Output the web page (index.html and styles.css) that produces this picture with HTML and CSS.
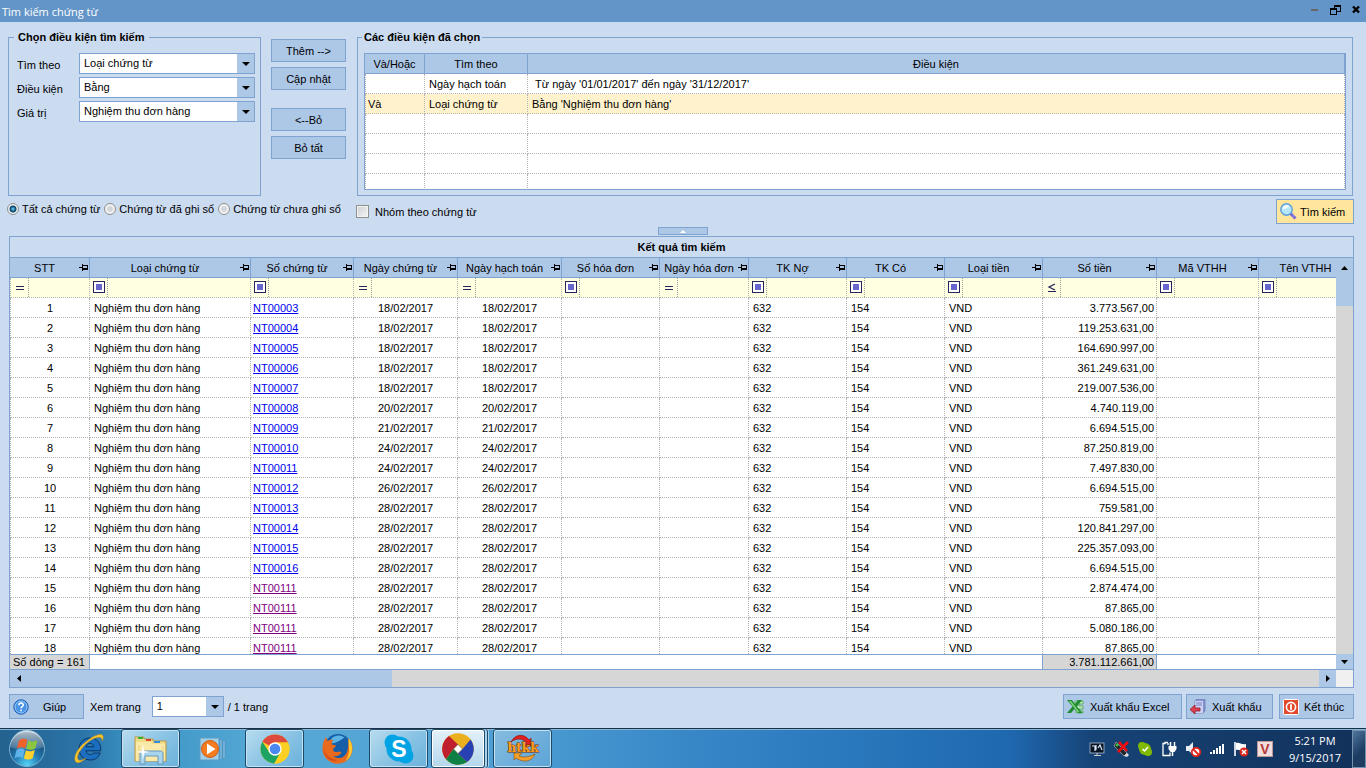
FILE: index.html
```html
<!DOCTYPE html>
<html lang="vi">
<head>
    <meta charset="UTF-8">
    <meta name="viewport" content="width=device-width, initial-scale=1.0">
    <title>Tìm kiếm chứng từ</title>
    <link rel="stylesheet" href="styles.css">
</head>
<body>

<header class="title-bar">
    <h1>Tìm kiếm chứng từ</h1>
    <div class="window-buttons">
        <button type="button" aria-label="Thu nhỏ"><svg width="11" height="11" viewBox="0 0 11 11"><path d="M2 4h7v2H2z" fill="#666"/></svg></button>
        <button type="button" aria-label="Khôi phục"><svg width="11" height="11" viewBox="0 0 11 11" shape-rendering="crispEdges"><path d="M4 0h7v7H7V6h3V2H5v1H4zM0 3h7v7H0zM1 5v4h5V5z" fill="#000" fill-rule="evenodd"/></svg></button>
        <button type="button" aria-label="Đóng"><svg width="11" height="11" viewBox="0 0 11 11"><path d="M2 1.500l6 6M8 1.500l-6 6" stroke="#000" stroke-width="2.400"/></svg></button>
    </div>
</header>

<main>
    <section class="conditions">
        <fieldset class="choose">
            <legend>Chọn điều kiện tìm kiếm</legend>
            <div class="field">
                <label for="searchBy">Tìm theo</label>
                <span class="combo"><select id="searchBy"><option>Loại chứng từ</option></select></span>
            </div>
            <div class="field">
                <label for="operator">Điều kiện</label>
                <span class="combo"><select id="operator"><option>Bằng</option></select></span>
            </div>
            <div class="field">
                <label for="value">Giá trị</label>
                <span class="combo"><select id="value"><option>Nghiệm thu đơn hàng</option></select></span>
            </div>
        </fieldset>

        <div class="actions">
            <button type="button" class="btn">Thêm --&gt;</button>
            <button type="button" class="btn">Cập nhật</button>
            <button type="button" class="btn remove">&lt;--Bỏ</button>
            <button type="button" class="btn">Bỏ tất</button>
        </div>

        <fieldset class="chosen">
            <legend>Các điều kiện đã chọn</legend>
            <div class="chosen-box">
                <table>
                    <colgroup><col class="w-join"><col class="w-by"><col></colgroup>
                    <thead>
                        <tr><th>Và/Hoặc</th><th>Tìm theo</th><th>Điều kiện</th></tr>
                    </thead>
                    <tbody>
                        <tr><td></td><td>Ngày hạch toán</td><td>&nbsp;Từ ngày '01/01/2017' đến ngày '31/12/2017'</td></tr>
                        <tr class="selected"><td>Và</td><td>Loại chứng từ</td><td>Bằng 'Nghiệm thu đơn hàng'</td></tr>
                        <tr><td></td><td></td><td></td></tr>
                        <tr><td></td><td></td><td></td></tr>
                        <tr><td></td><td></td><td></td></tr>
                        <tr><td></td><td></td><td></td></tr>
                    </tbody>
                </table>
            </div>
        </fieldset>
    </section>

    <section class="options">
        <div class="radios">
            <label><input type="radio" name="posted" checked>Tất cả chứng từ</label>
            <label><input type="radio" name="posted">Chứng từ đã ghi sổ</label>
            <label><input type="radio" name="posted">Chứng từ chưa ghi sổ</label>
        </div>
        <label class="group-by"><input type="checkbox">Nhóm theo chứng từ</label>
        <button type="button" class="btn search">
            <svg width="17" height="17" viewBox="0 0 17 17"><path d="M10.500 10.500l5 5" stroke="#7a6ad8" stroke-width="3"/><path d="M13 13.500l1-1" stroke="#d5cfff"/><circle cx="6.500" cy="6.500" r="5.700" fill="#b8e6fa" stroke="#5a9fd8" stroke-width="1.400"/><path d="M2.500 6a4 4 0 0 1 7-2.500C8 5 5 6.500 2.500 6z" fill="#f0fbff"/></svg>
            Tìm kiếm
        </button>
    </section>

    <button type="button" class="splitter" aria-label="Thu gọn"><svg width="6" height="3" viewBox="0 0 6 3"><path d="M0 3l3-3 3 3z" fill="#fff"/></svg></button>

    <section class="results">
        <h2>Kết quả tìm kiếm</h2>
        <div class="grid-area">
            <div class="grid-view">
                <table class="grid">
                    <colgroup id="cols"></colgroup>
                    <thead>
                        <tr id="heads"></tr>
                        <tr id="filters" class="filter-row"></tr>
                    </thead>
                    <tbody id="rows"></tbody>
                </table>
            </div>
            <div class="vscroll">
                <button type="button" class="arrow up" aria-label="Lên"><svg width="7" height="4" viewBox="0 0 7 4"><path d="M0 4l3.500-4L7 4z"/></svg></button>
                <div class="vthumb"></div>
            </div>
            <div class="summary">
                <div class="count">Số dòng = 161</div>
                <div class="total">3.781.112.661,00</div>
                <div class="rest"></div>
            </div>
            <button type="button" class="arrow down" aria-label="Xuống"><svg width="7" height="4" viewBox="0 0 7 4"><path d="M0 0l3.500 4L7 0z"/></svg></button>
            <div class="hscroll">
                <button type="button" class="arrow" aria-label="Trái"><svg width="4" height="7" viewBox="0 0 4 7"><path d="M4 0L0 3.500 4 7z"/></svg></button>
                <div class="hthumb"></div>
                <button type="button" class="arrow right" aria-label="Phải"><svg width="4" height="7" viewBox="0 0 4 7"><path d="M0 0l4 3.500L0 7z"/></svg></button>
            </div>
            <div class="corner"></div>
        </div>
    </section>

    <section class="footer">
        <button type="button" class="btn help">
            <svg width="16" height="16" viewBox="0 0 16 16"><circle cx="8" cy="8" r="7.200" fill="#4a93e4" stroke="#1d5cb0"/><circle cx="8" cy="8" r="6" fill="none" stroke="#a9d2fb" stroke-width=".8"/><path d="M5.800 6.300c0-3 4.600-2.900 4.500-.2 0 1.500-2.200 1.600-2.200 3.200M8.100 10.600v1.600" stroke="#fff" stroke-width="1.500" fill="none"/></svg>
            Giúp
        </button>
        <label for="page">Xem trang</label>
        <span class="combo page"><select id="page"><option>1</option></select></span>
        <span class="pages">/ 1 trang</span>
        <button type="button" class="btn excel">
            <svg width="17" height="16" viewBox="0 0 17 16"><path d="M8 2h8v3h-4v2h4v3h-4v2h4v2H9z" fill="#bfe8b8" stroke="#4ba54b" stroke-width=".8"/><path d="M0 1h5l3 4 3-4h4L10 7.500 15.500 14H11L7.500 10 4 14H0l5.500-6.500z" fill="#1f8c35"/><path d="M2 2h2l8.500 11h-2z" fill="#7fd07c"/></svg>
            Xuất khẩu Excel
        </button>
        <button type="button" class="btn export">
            <svg width="16" height="16" viewBox="0 0 16 16"><path d="M5 2l2-2h8v12l-2 2H5z" fill="#8794cf" stroke="#6974b0" stroke-width=".7"/><path d="M5 2h8v12H5z" fill="#c9d0f3"/><path d="M6 4h6M6 6h6" stroke="#7986c6"/><path d="M0 10.500L5 6v3h5v3H5v3z" fill="#e04050" stroke="#8e1926" stroke-width=".8"/></svg>
            Xuất khẩu
        </button>
        <button type="button" class="btn close">
            <svg width="16" height="16" viewBox="0 0 16 16"><rect x=".5" y=".5" width="15" height="15" rx="1" fill="#e2492c" stroke="#fff"/><circle cx="8" cy="8" r="4.600" fill="none" stroke="#fff" stroke-width="1.600"/><path d="M8 5.300v5.400" stroke="#fff" stroke-width="1.800"/></svg>
            Kết thúc
        </button>
    </section>
</main>

<footer class="taskbar">
    <button type="button" class="start" aria-label="Start">
        <svg width="38" height="38" viewBox="0 0 38 38">
            <defs>
                <radialGradient id="orb" cx=".5" cy=".95" r=".85"><stop offset="0" stop-color="#54d5f6"/><stop offset=".45" stop-color="#2379b1"/><stop offset="1" stop-color="#174166"/></radialGradient>
                <linearGradient id="shine" x2="0" y2="1"><stop offset="0" stop-color="#fff" stop-opacity=".7"/><stop offset="1" stop-color="#fff" stop-opacity=".15"/></linearGradient>
            </defs>
            <circle cx="19" cy="19" r="17.500" fill="url(#orb)" stroke="#7db0cf"/>
            <path d="M2 17a17 17 0 0 1 34 0c-8 3-26 3-34 0z" fill="url(#shine)"/>
            <path d="M11 10.500c3-2.500 5.500-2 8.400-.6l-2.200 8.600c-2.700-1.500-5.200-1.600-8.400.3z" fill="#f0602a"/>
            <path d="M20.400 10.500c2.900 1.600 5.800 1.600 9.100-.5l-2.200 8.500c-3.100 1.800-6 1.800-9.100.3z" fill="#8cc63e"/>
            <path d="M8.500 20c3-2 5.600-1.600 8.300-.3l-2.100 8.300c-2.600-1.400-5.200-1.500-8.300.4z" fill="#5cb4ea"/>
            <path d="M17.900 20.200c2.900 1.500 5.800 1.500 9-.4l-2.100 8.300c-3.100 2-6 1.900-9 .4z" fill="#fdd12e"/>
        </svg>
    </button>
    <nav class="tasks">
        <button type="button" class="task" aria-label="Internet Explorer">
            <svg width="32" height="32" viewBox="0 0 32 32"><path d="M17 5C10.500 5 6 10 6 16s4.500 11 11.500 11c5 0 8.300-2.800 9.700-7h-6.700c-1.500 2.500-7 2.200-7.500-2.200h14.800C28.300 10.500 24 5 17 5zm-4 8.800c.6-4.600 7.500-4.600 7.800 0z" fill="#1c6fc0" stroke="#083566"/><path d="M3 29C-1 25 5 14 14 8 21 2 29 0 30 3c.6 1.500 0 3.500-1 5 .3-2-.3-3-1.500-3.500C20 3 8 14 5 22c-1 2.600-.5 4.500 1 5.200 2 .6 5-.8 7-2.200-3 3.500-8 6-10 4z" fill="#f9c62f" stroke="#c98a10" stroke-width=".5"/></svg>
        </button>
        <button type="button" class="task open" aria-label="Windows Explorer">
            <svg width="34" height="32" viewBox="0 0 34 32"><path d="M1 4h9v2h9v2h13v20H1z" fill="#f4dd8a" stroke="#b99a46"/><path d="M4 4h5v2H4z" fill="#36b036"/><path d="M12 6h5v2h-5z" fill="#d8432a"/><path d="M20 8h6v2h-6z" fill="#328fd6"/><path d="M2 9h14l2 2h13v17H2z" fill="#faeaa9"/><path d="M5 12v16M29 13v15" stroke="#e8d184"/><path d="M6 31V21c0-2 1-3 3-3h17c2 0 3 1 3 3v10h-5v-8H11v8z" fill="#a8d5ee" stroke="#6698ba"/><path d="M9 11l1 7 6 1-6 1-1 7-1-7-6-1 6-1z" fill="#fff"/></svg>
        </button>
        <button type="button" class="task" aria-label="Media Player">
            <svg width="30" height="28" viewBox="0 0 30 28"><path d="M2 3h19v22H2z" fill="#a3cee8" stroke="#5f9dc4"/><path d="M22 4l2 1v19l-2 1zM25 5l2 1v17l-2 1z" fill="#85bce0" stroke="#4b8fbb" stroke-width=".6"/><circle cx="12" cy="14" r="8.500" fill="#f47b20" stroke="#d25c10"/><path d="M9 8.500l8.500 5.500L9 19.500z" fill="#fff"/></svg>
        </button>
        <button type="button" class="task open" aria-label="Chrome">
            <svg width="30" height="30" viewBox="0 0 30 30"><circle cx="15" cy="15" r="14.500" fill="#fcd023"/><path d="M15 15L2.400 7.800A14.500 14.500 0 0 1 27.600 7.800L28 8.500H15z" fill="#dd4b3e"/><path d="M2.400 7.800a14.500 14.500 0 0 0 12 21.700L20.700 18.300 9.300 18.300z" fill="#1da463"/><path d="M15 8.500h13a14.500 14.500 0 0 1-13.600 21L20.600 18z" fill="#fcd023"/><circle cx="15" cy="15" r="6.700" fill="#fff"/><circle cx="15" cy="15" r="5.300" fill="#4a87ee"/></svg>
        </button>
        <button type="button" class="task" aria-label="Firefox">
            <svg width="32" height="32" viewBox="0 0 32 32"><circle cx="17" cy="14.500" r="13.500" fill="#165fa8"/><path d="M10 6c3-4 10-5 14-1-3 0-3 2-6 3s-5 3-7 2z" fill="#5ab2e5"/><path d="M27.500 5.500c4 4 5 10 3 15.500C28 28 21 31.500 14 30.500 6 29 1 22 1.500 15 1.700 10 3 7 5 4l1.500 4C8.500 6.500 11 6.700 12.500 7 11 8.500 10.500 10 11 11.500l4 1c0 1.500-2 2.300-3 3.500 0 2 1.500 3.500 4 3 2-.5 3-1 4.500.5-1.500 3-5 4.200-8.500 3.500 5 4 12 2 14-4 1.500-4 1.500-8 1.500-13.500z" fill="#e96a1c"/><path d="M27.500 5.500c3.500 4 4.500 9 3 14.500-1 3-3 6-6 8 3-5 4-9 3.500-13-.3-3.500-.5-6-.5-9.500z" fill="#ffcc2b"/><path d="M2 13c1 8 7 14 15 14-6 3-14-1-15-14z" fill="#d44a1a"/></svg>
        </button>
        <button type="button" class="task open" aria-label="Skype">
            <svg width="30" height="30" viewBox="0 0 30 30"><circle cx="15" cy="15" r="12.500" fill="#00a3e4"/><circle cx="8.500" cy="8.500" r="8" fill="#00a3e4"/><circle cx="21.500" cy="21.500" r="8" fill="#00a3e4"/><text x="15" y="23" text-anchor="middle" class="skype-letter">S</text></svg>
        </button>
        <button type="button" class="task open active" aria-label="MISA">
            <svg width="32" height="32" viewBox="0 0 32 32"><circle cx="16" cy="16" r="15.800" fill="#eab01e"/><path d="M16 11.500L7 3A15.800 15.800 0 0 0 4 26.300L11.500 16z" fill="#c01f2e"/><path d="M11.500 16L4 26.300A15.800 15.800 0 0 0 25 29L16 20.500z" fill="#0d8046"/><path d="M16 20.500L25 29A15.800 15.800 0 0 0 28.500 6.500L20.500 16z" fill="#2740b4"/><path d="M16 11.500l4.500 4.500-4.500 4.500-4.500-4.500z" fill="#fff" stroke="#444" stroke-width=".5"/></svg>
        </button>
        <button type="button" class="task open running" aria-label="HTKK">
            <svg width="34" height="30" viewBox="0 0 34 30"><path d="M5 8C9 0 18-1 23 6l2-2v8h-7l2.500-3C17 4 10 4 5 8z" fill="#e21f1f" stroke="#7a1010" stroke-width=".6"/><path d="M29 20c-3 8-12 9-19 4l-2 2v-7h8l-3 3c5 2 10 1 16-2z" fill="#f4a02a" stroke="#884a0c" stroke-width=".6"/><text x="17" y="18" text-anchor="middle" class="htkk-letters">htkk</text></svg>
        </button>
    </nav>
    <div class="tray">
        <svg width="16" height="16" viewBox="0 0 16 16"><rect x="1" y="2" width="14" height="10" fill="#0a1322" stroke="#8ea4bd"/><path d="M3 5h3v5M7 4v5M9 7l2-3 2 5" stroke="#d9ecff" stroke-width="1.200" fill="none"/><path d="M8 12v2M5 14.500h7" stroke="#ccc"/></svg>
        <svg width="16" height="16" viewBox="0 0 16 16"><path d="M3 1l11 11-3 3L1 5z" fill="#20262c" stroke="#889"/><circle cx="4" cy="4" r="1.500" fill="#3fc03f"/><path d="M11 15l3-3 2 2-2 2z" fill="#ddd"/><path d="M5 11L15 1M6 1l8 9" stroke="#f00c0c" stroke-width="2.600"/></svg>
        <svg width="16" height="16" viewBox="0 0 16 16"><circle cx="8" cy="8" r="6" fill="#7fba00"/><circle cx="5" cy="5" r="4" fill="#7fba00"/><circle cx="11" cy="11" r="4" fill="#7fba00"/><path d="M5.500 8l2 2 3.500-4" stroke="#fff" stroke-width="1.500" fill="none"/></svg>
        <svg width="16" height="16" viewBox="0 0 16 16"><path d="M7 1.500H4v1H2v12h7v-3M7 2v2" stroke="#fff" stroke-width="1.300" fill="none"/><path d="M9.500 1v4M13.500 1v4" stroke="#fff" stroke-width="1.500"/><path d="M7.500 5h8v3l-2 3h-4l-2-3z" fill="#fff"/><path d="M11.500 10v5" stroke="#fff" stroke-width="1.500"/></svg>
        <svg width="16" height="16" viewBox="0 0 16 16"><path d="M1 5h3l4-4v13l-4-4H1z" fill="#e6edf5"/><circle cx="11" cy="11" r="4.200" fill="#fff" stroke="#e0261c" stroke-width="1.800"/><path d="M8 8l6 6" stroke="#e0261c" stroke-width="1.800"/></svg>
        <svg width="16" height="16" viewBox="0 0 16 16" shape-rendering="crispEdges"><path d="M1 11h2v2H1zM4 9h2v4H4zM7 7h2v6H7zM10 5h2v8h-2zM13 3h2v10h-2z" fill="#fff"/></svg>
        <svg width="16" height="16" viewBox="0 0 16 16"><path d="M2 1v14" stroke="#fff" stroke-width="1.600"/><path d="M3 2c4-1 5 2 10 1v7c-5 1-6-2-10-1z" fill="#fff"/><circle cx="11" cy="11" r="4.500" fill="#d8281e"/><path d="M9 9l4 4M13 9l-4 4" stroke="#fff" stroke-width="1.500"/></svg>
        <svg width="16" height="16" viewBox="0 0 16 16"><rect x=".5" y=".5" width="15" height="15" fill="#f3dede" stroke="#b99"/><text x="8" y="13" text-anchor="middle" class="v-letter">V</text></svg>
    </div>
    <div class="clock"><span>5:21 PM</span><span>9/15/2017</span></div>
    <button type="button" class="show-desktop" aria-label="Show desktop"></button>
</footer>

<script>
    // name, width, filter operator
    const columns = [
        ["STT", 80, "="],
        ["Loại chứng từ", 161, "box"],
        ["Số chứng từ", 103, "box"],
        ["Ngày chứng từ", 104, "="],
        ["Ngày hạch toán", 104, "="],
        ["Số hóa đơn", 98, "box"],
        ["Ngày hóa đơn", 89, "="],
        ["TK Nợ", 98, "box"],
        ["TK Có", 98, "box"],
        ["Loại tiền", 98, "box"],
        ["Số tiền", 114, "<"],
        ["Mã VTHH", 102, "box"],
        ["Tên VTHH", 104, "box"]
    ];

    // document number, date, amount
    const data = [
        ["NT00003", "18/02/2017", "3.773.567,00"],
        ["NT00004", "18/02/2017", "119.253.631,00"],
        ["NT00005", "18/02/2017", "164.690.997,00"],
        ["NT00006", "18/02/2017", "361.249.631,00"],
        ["NT00007", "18/02/2017", "219.007.536,00"],
        ["NT00008", "20/02/2017", "4.740.119,00"],
        ["NT00009", "21/02/2017", "6.694.515,00"],
        ["NT00010", "24/02/2017", "87.250.819,00"],
        ["NT00011", "24/02/2017", "7.497.830,00"],
        ["NT00012", "26/02/2017", "6.694.515,00"],
        ["NT00013", "28/02/2017", "759.581,00"],
        ["NT00014", "28/02/2017", "120.841.297,00"],
        ["NT00015", "28/02/2017", "225.357.093,00"],
        ["NT00016", "28/02/2017", "6.694.515,00"],
        ["NT00111", "28/02/2017", "2.874.474,00"],
        ["NT00111", "28/02/2017", "87.865,00"],
        ["NT00111", "28/02/2017", "5.080.186,00"],
        ["NT00111", "28/02/2017", "87.865,00"]
    ];

    const pin = '<svg width="9" height="7" viewBox="0 0 9 7" shape-rendering="crispEdges"><path d="M0 3h3v1H0zM3 0h1v7H3zM4 1h5v1H4zM4 4h5v2H4zM8 2h1v2H8z" fill="#000"/></svg>';
    const operators = {
        "=": '<svg width="12" height="12" viewBox="0 0 12 12" shape-rendering="crispEdges"><path d="M2 5h8v1H2zM2 8h8v1H2z" fill="#26265c"/></svg>',
        "box": '<svg width="12" height="12" viewBox="0 0 12 12" shape-rendering="crispEdges"><path d="M0 0h12v12H0z" fill="#26265c"/><path d="M1 1h10v10H1z" fill="#fff"/><path d="M3 3h6v6H3z" fill="#6666cc"/></svg>',
        "<": '<svg width="12" height="12" viewBox="0 0 12 12"><path d="M9 3L3 6l6 3" stroke="#26265c" stroke-width="1.300" fill="none"/><path d="M2 10h8v1H2z" fill="#26265c"/></svg>'
    };

    document.getElementById("cols").innerHTML = columns.map(c => `<col style="width:${c[1]}px">`).join("");
    document.getElementById("heads").innerHTML = columns.map(c => `<th><div class="head"><span>${c[0]}</span>${pin}</div></th>`).join("");
    document.getElementById("filters").innerHTML = columns.map(c => `<td><div class="op">${operators[c[2]]}</div></td>`).join("");

    document.getElementById("rows").innerHTML = data.map((d, i) => `<tr>
        <td class="center">${i + 1}</td>
        <td>Nghiệm thu đơn hàng</td>
        <td class="doc"><a href="#"${d[0] === "NT00111" ? ' class="seen"' : ""}>${d[0]}</a></td>
        <td class="center">${d[1]}</td>
        <td class="center">${d[1]}</td>
        <td></td>
        <td></td>
        <td>632</td>
        <td>154</td>
        <td>VND</td>
        <td class="money">${d[2]}</td>
        <td></td>
        <td></td>
    </tr>`).join("");
</script>

</body>
</html>
```

FILE: styles.css
```css
* {
    box-sizing: border-box;
}

body {
    margin: 0;
    height: 100vh;
    display: flex;
    flex-direction: column;
    overflow: hidden;
    background-color: #cbdbf0;
    color: #000;
    font: 11px/14px "Liberation Sans", Arial, sans-serif;
}

button, select, input {
    font: inherit;
    color: inherit;
    margin: 0;
    padding: 0;
}

button {
    cursor: pointer;
}

/* title bar */
.title-bar {
    display: flex;
    justify-content: space-between;
    height: 22px;
    padding: 0 4px 0 2px;
    background-color: #6495c8;
}

.title-bar h1 {
    margin: 0;
    color: #fff;
    font: 11px/23px "Open Sans", "Noto Sans", sans-serif;
}

.window-buttons {
    display: flex;
    gap: 10px;
    padding-top: 5px;
}

.window-buttons button {
    width: 11px;
    height: 11px;
    border: none;
    background: none;
}

.window-buttons svg {
    display: block;
}

main {
    flex: 1;
    min-height: 0;
    display: flex;
    flex-direction: column;
    padding: 8px 12px 9px 8px;
}

/* conditions */
.conditions {
    display: flex;
    height: 166px;
    padding-right: 1px;
}

fieldset {
    margin: 0;
    min-width: 0;
    border: 1px solid #7fa3d1;
}

legend {
    padding: 0 4px;
    font-weight: bold;
}

.choose {
    width: 253px;
    padding: 9px 5px 0 8px;
}

.chosen {
    flex: 1;
    padding: 9px 6px 5px 6px;
}

.chosen legend {
    padding: 0 2px;
    margin-left: -2px;
}

.choose legend {
    margin-left: -3px;
}

.field {
    display: flex;
    align-items: center;
    margin-bottom: 3px;
}

.field label {
    width: 62px;
    padding-top: 2px;
}

.combo {
    position: relative;
    flex: 1;
    height: 21px;
}

.combo select {
    display: block;
    width: 100%;
    height: 100%;
    padding: 0 18px 2px 4px;
    border: 1px solid #7fa3d1;
    border-radius: 0;
    appearance: none;
    background: linear-gradient(to left, #adc7e7 17px, #fff 17px);
}

.combo::after {
    content: "";
    position: absolute;
    top: 9px;
    right: 5px;
    border: 4px solid transparent;
    border-top-color: #000;
    border-bottom: none;
    pointer-events: none;
}

.btn {
    height: 23px;
    border: 1px solid #7fa3d1;
    background-color: #adc7e7;
}

.actions {
    display: flex;
    flex-direction: column;
    gap: 5px;
    width: 75px;
    margin: 9px 11px 0 10px;
}

.actions .remove {
    margin-top: 13px;
}

.chosen-box {
    height: 137px;
    overflow: hidden;
    border: 1px solid #7fa3d1;
    background-color: #fff;
}

table {
    width: 100%;
    table-layout: fixed;
    border-spacing: 0;
}

.w-join {
    width: 60px;
}

.w-by {
    width: 103px;
}

th {
    height: 20px;
    padding: 0;
    font-weight: normal;
    background-color: #adc7e7;
    border-right: 1px solid #7fa3d1;
    border-bottom: 1px solid #7fa3d1;
}

td {
    height: 20px;
    padding: 0 4px;
    white-space: nowrap;
    overflow: hidden;
    border-right: 1px dotted #b4b4b4;
    border-bottom: 1px dotted #b4b4b4;
}

td:first-child {
    border-left: 1px dotted #b4b4b4;
}

.chosen-box td:first-child {
    padding-left: 2px;
}

.selected td {
    background-color: #fff2cc;
}

/* options line */
.options {
    display: flex;
    align-items: center;
    height: 33px;
    padding-bottom: 2px;
}

.radios {
    display: flex;
    gap: 5px;
    align-self: flex-start;
    width: 348px;
    padding-top: 6px;
}

.options label {
    display: flex;
    align-items: center;
    white-space: nowrap;
}

.radios label {
    margin-left: -1px;
}

.options input[type="radio"] {
    width: 12px;
    height: 12px;
    margin-right: 3px;
    appearance: none;
    border: 1px solid #8e8f8f;
    border-radius: 50%;
    background: radial-gradient(circle, #d2d5d8 2px, #f4f4f4 4px);
}

.options input[type="radio"]:checked {
    background: radial-gradient(circle at 5px 5px, #7fd6f4 0, #1c6e9c 2px, #0d3c5c 3px, #eef2f4 4px);
}

.options input[type="checkbox"] {
    width: 13px;
    height: 13px;
    margin-right: 6px;
    appearance: none;
    border: 1px solid #8e8f8f;
    background: linear-gradient(135deg, #cbcfd5, #f6f6f6);
    box-shadow: inset 0 0 0 1px #f4f4f4;
}

.search {
    display: flex;
    align-items: center;
    gap: 3px;
    width: 78px;
    height: 25px;
    margin-left: auto;
    padding-left: 3px;
    background-color: #ffe69c;
    white-space: nowrap;
}

.splitter {
    display: flex;
    justify-content: center;
    align-items: center;
    align-self: center;
    flex: none;
    width: 50px;
    height: 8px;
    margin: -2px 0 1px 4px;
    border: 1px solid #7fa3d1;
    background-color: #adc7e7;
}

/* results */
.results {
    flex: 1;
    min-height: 0;
    display: flex;
    flex-direction: column;
    margin-left: 1px;
    border: 1px solid #7fa3d1;
}

.results h2 {
    margin: 0;
    font-size: 11px;
    line-height: 20px;
    text-align: center;
}

.grid-area {
    flex: 1;
    min-height: 0;
    display: grid;
    grid-template-columns: minmax(0, 1fr) 17px;
    grid-template-rows: minmax(0, 1fr) 15px 18px;
    border-top: 1px solid #7fa3d1;
}

.grid-view {
    overflow: hidden;
    background-color: #fff;
}

.grid {
    width: 1353px;
    min-width: 100%;
}

.head {
    display: flex;
    align-items: center;
    padding-right: 1px;
    white-space: nowrap;
}

.head span {
    flex: 1;
    margin: 0 1px;
}

.filter-row td {
    padding: 0;
    background-color: #ffffe1;
}

.op {
    display: flex;
    justify-content: center;
    width: 18px;
    height: 19px;
    padding-top: 3px;
    border-right: 1px dotted #999;
}

.center {
    text-align: center;
}

.grid .doc {
    padding-left: 2px;
}

.grid .money {
    padding-right: 2px;
    text-align: right;
}

a {
    color: #0000ee;
}

a.seen {
    color: #800080;
}

.arrow {
    display: flex;
    align-items: center;
    justify-content: center;
    width: 17px;
    border: none;
    background-color: #adc7e7;
}

.vscroll {
    background-color: #d6d6d6;
}

.vscroll .up {
    height: 20px;
}

.vthumb {
    height: 28px;
    background-color: #adc7e7;
}

.summary {
    display: flex;
    border-top: 1px solid #7fa3d1;
    background-color: #fff;
}

.count {
    width: 80px;
    padding-left: 3px;
    background-color: #d6d6d6;
    border-right: 1px solid #7fa3d1;
    white-space: nowrap;
}

.total {
    width: 115px;
    margin-left: auto;
    padding-right: 2px;
    text-align: right;
    background-color: #d6d6d6;
    border: 1px solid #7fa3d1;
    border-width: 0 1px;
}

.rest {
    width: 179px;
}

.hscroll {
    display: flex;
    border-top: 1px solid #7fa3d1;
    background-color: #d6d6d6;
}

.hthumb {
    width: 27.5%;
    background-color: #adc7e7;
}

.hscroll .right {
    margin-left: auto;
}

.corner {
    border-top: 1px solid #7fa3d1;
    background-color: #f0f0f0;
}

/* bottom buttons */
.footer {
    display: flex;
    align-items: center;
    padding: 6px 0 0 1px;
    white-space: nowrap;
}

.footer .btn {
    display: flex;
    align-items: center;
    height: 25px;
    padding-left: 3px;
}

.footer .help {
    width: 75px;
    gap: 14px;
    margin-right: 6px;
}

.combo.page {
    flex: none;
    width: 72px;
    margin: 0 4px 0 11px;
}

.footer .excel {
    width: 119px;
    gap: 6px;
    margin-left: auto;
}

.footer .export {
    width: 87px;
    gap: 6px;
    margin: 0 6px 0 4px;
}

.footer .close {
    width: 75px;
    gap: 5px;
}

/* taskbar */
.taskbar {
    display: flex;
    align-items: center;
    height: 40px;
    border-top: 1px solid #1b2f45;
    box-shadow: inset 0 1px 0 #86b8dc;
    background: linear-gradient(to right, #24628f 0, #2b74a8 6%, #3b95c6 10%, #57aad6 20%, #4b9dd2 38%, #3888c8 50%, #2a78bd 62%, #1f68b0 74%, #164376 80%, #12315a 100%);
}

.start {
    width: 59px;
    height: 38px;
    padding-left: 8px;
    border: none;
    background: none;
    text-align: left;
}

.start svg {
    display: block;
}

.tasks {
    display: flex;
    gap: 3px;
}

.task {
    display: flex;
    align-items: center;
    justify-content: center;
    width: 59px;
    height: 39px;
    border: 1px solid transparent;
    border-radius: 3px;
    background: none;
}

.open {
    border-color: #1d4a6b;
    box-shadow: inset 0 0 0 1px #c5e2f2;
    background: linear-gradient(135deg, #b8dcee, #8cc4e4 50%, #69b1dc);
}

.active {
    width: 54px;
    margin-right: 5px;
    box-shadow: inset 0 0 0 1px #fff, 2px 0 0 #a9d3ec, 3px 0 0 #1d4a6b, 4px 0 0 #a9d3ec;
    background: linear-gradient(#e4f1f9, #b3d6ec);
}

.running {
    background: linear-gradient(135deg, #86bce0, #5ca4d6);
}

.skype-letter {
    font: bold 23px "Liberation Sans", Arial, sans-serif;
    fill: #fff;
}

.htkk-letters {
    font: bold 12px "DejaVu Serif", serif;
    fill: #ff9d1e;
    stroke: #6b3306;
    stroke-width: 1px;
    paint-order: stroke;
}

.v-letter {
    font: bold 14px "Liberation Sans", Arial, sans-serif;
    fill: #b33a3a;
}

.tray {
    display: flex;
    gap: 8px;
    margin-left: auto;
}

.clock {
    display: flex;
    flex-direction: column;
    width: 79px;
    padding-left: 5px;
    color: #fff;
    text-align: center;
    font: 11px/17px "Open Sans", "Noto Sans", sans-serif;
}

.show-desktop {
    width: 14px;
    height: 38px;
    border: 1px solid #7591ae;
    background: linear-gradient(135deg, #50759b, #1c3c62 60%);
}
```
